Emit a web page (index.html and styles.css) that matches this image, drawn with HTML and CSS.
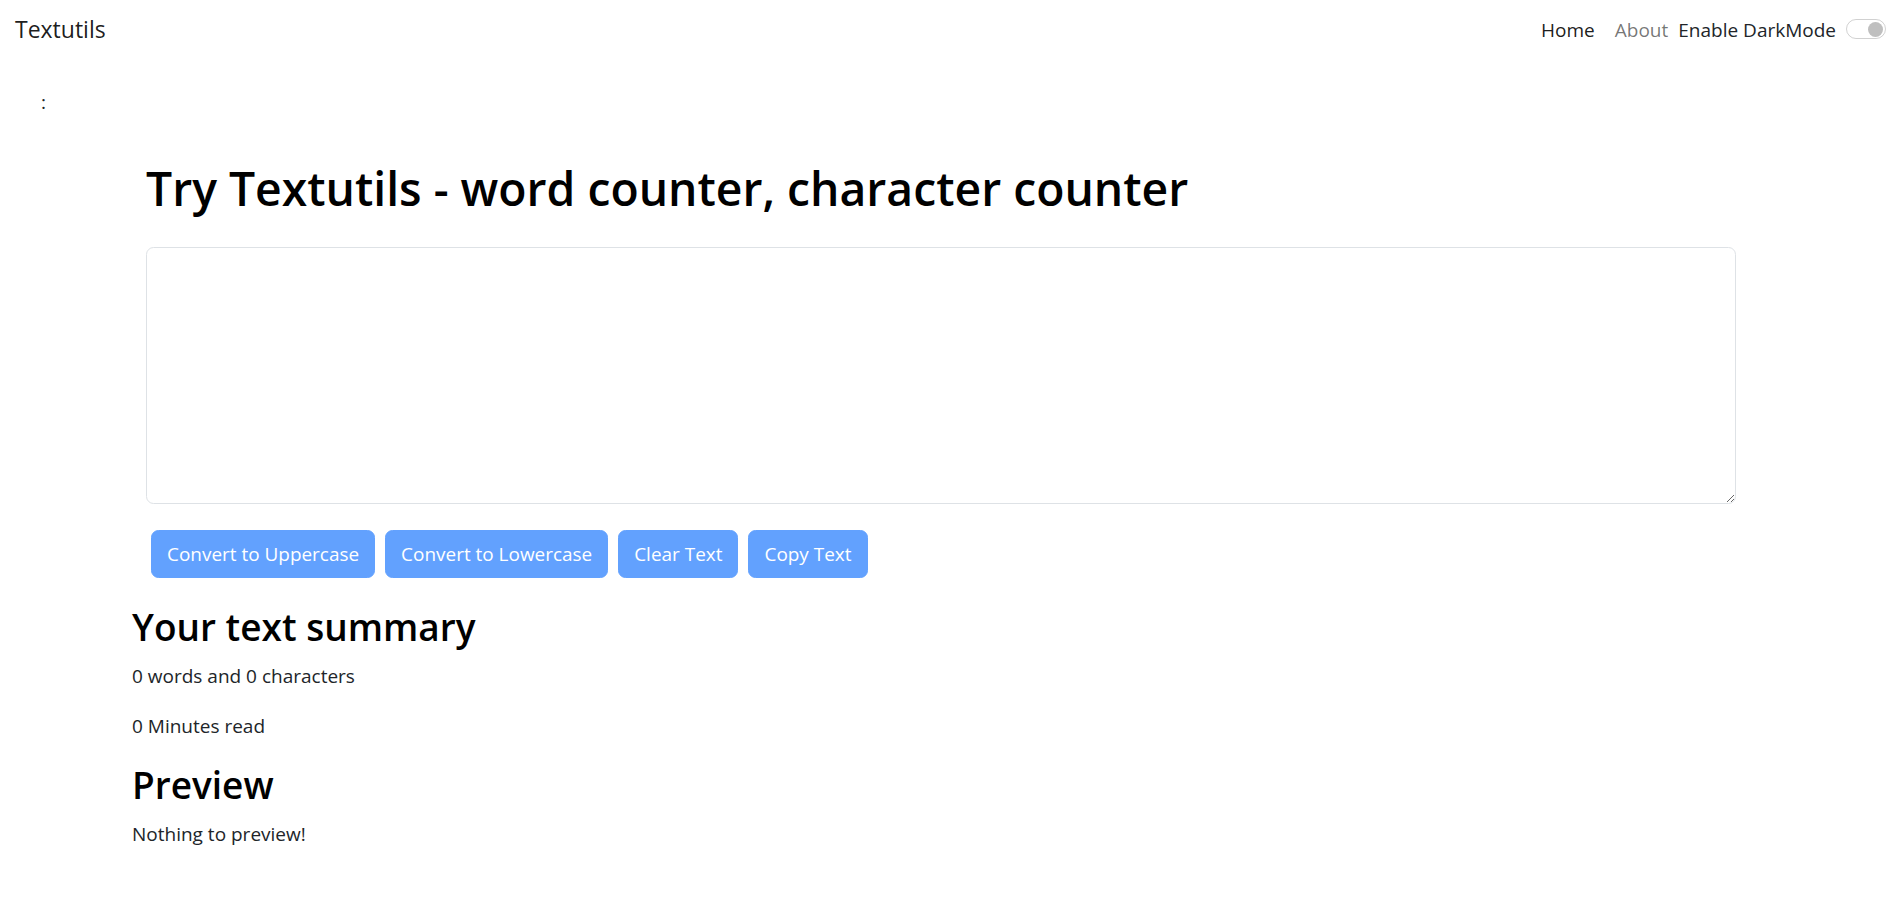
FILE: index.html
```html
<!DOCTYPE html>
<html lang="en">
<head>
<meta charset="utf-8">
<title>TextUtils</title>
<link rel="stylesheet" href="styles.css">
</head>
<body>
<nav class="navbar">
  <a class="brand" href="#">Textutils</a>
  <div class="nav-right">
    <ul class="nav-links">
      <li><a class="nav-link active" href="#">Home</a></li>
      <li><a class="nav-link" href="#">About</a></li>
    </ul>
    <div class="switch-wrap">
      <label class="switch-label">Enable DarkMode</label>
      <span class="switch"><span class="knob"></span></span>
    </div>
  </div>
</nav>
<div class="alert-slot">:</div>
<main class="editor">
  <h1 class="title">Try Textutils - word counter, character counter</h1>
  <textarea class="textbox" rows="8"></textarea>
  <div class="actions">
    <button class="btn" disabled>Convert to Uppercase</button>
    <button class="btn" disabled>Convert to Lowercase</button>
    <button class="btn" disabled>Clear Text</button>
    <button class="btn" disabled>Copy Text</button>
  </div>
</main>
<section class="summary">
  <h2 class="sub">Your text summary</h2>
  <p class="line">0 words and 0 characters</p>
  <p class="line">0 Minutes read</p>
  <h2 class="sub">Preview</h2>
  <p class="line">Nothing to preview!</p>
</section>
</body>
</html>
```
FILE: styles.css
```css
* { box-sizing: border-box; }

body {
  margin: 0;
  font-family: "Open Sans", "Noto Sans", sans-serif;
  font-size: 19px;
  line-height: 30px;
  color: #212529;
  background: #ffffff;
}

.navbar {
  display: flex;
  justify-content: space-between;
  align-items: center;
  height: 60px;
  padding: 0 9px 0 15px;
}

.brand {
  font-size: 23px;
  line-height: 37.5px;
  color: rgba(0, 0, 0, 0.9);
  text-decoration: none;
}

.nav-right {
  display: flex;
  align-items: center;
}

.nav-links {
  display: flex;
  list-style: none;
  margin: 0;
  padding: 0;
}

.nav-link {
  display: block;
  padding: 0 10px;
  color: rgba(0, 0, 0, 0.55);
  text-decoration: none;
}

.nav-link.active {
  color: rgba(0, 0, 0, 0.9);
}

.switch-wrap {
  display: flex;
  align-items: center;
  gap: 10px;
}

.switch-label {
  color: #212529;
}

.switch {
  display: flex;
  align-items: center;
  justify-content: flex-end;
  width: 40px;
  height: 20px;
  padding: 0 2px;
  border: 1.25px solid rgba(0, 0, 0, 0.18);
  border-radius: 10px;
  margin-bottom: 2px;
}

.knob {
  width: 15px;
  height: 15px;
  border-radius: 50%;
  background: #bfbfbf;
}

.alert-slot {
  height: 99px;
  padding: 27px 0 0 41px;
}

.editor {
  margin-left: 146px;
  width: 1590px;
}

.title {
  margin: 0 0 28px;
  font-size: 46.3px;
  line-height: 60px;
  font-weight: 600;
  color: #000;
}

.textbox {
  display: block;
  width: 100%;
  height: 257px;
  margin: 0;
  padding: 7.5px 15px;
  border: 1.25px solid #dee2e6;
  border-radius: 7.5px;
  font: inherit;
  color: #212529;
  background: #fff;
}

.actions {
  display: flex;
  gap: 10px;
  margin-top: 26px;
  padding-left: 5px;
}

.btn {
  height: 47.5px;
  padding: 7.5px 15px;
  border: 1.25px solid rgb(98, 161, 254);
  border-radius: 7.5px;
  background: rgb(98, 161, 254);
  color: #ffffff;
  font: inherit;
  font-size: 18.95px;
  line-height: 30px;
}

.summary {
  margin: 25.5px 0 0 132px;
}

.sub {
  margin: 0 0 10px;
  font-size: 37px;
  line-height: 48px;
  font-weight: 600;
  color: #000;
}

.line {
  margin: 0 0 20px;
}
```
